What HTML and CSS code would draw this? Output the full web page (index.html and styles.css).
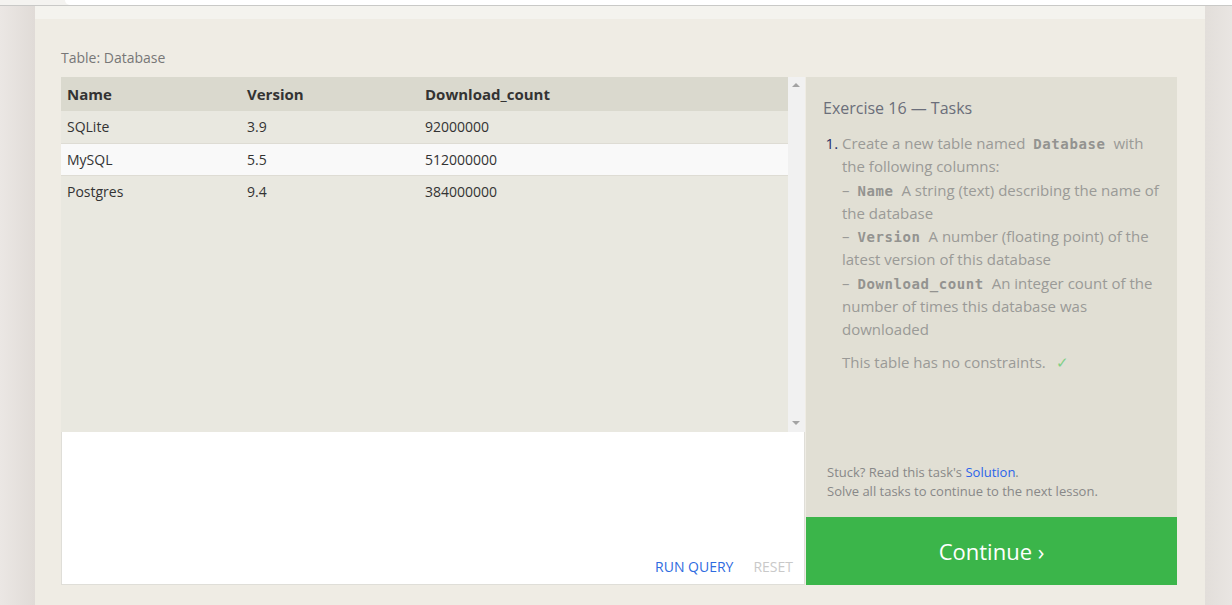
FILE: index.html
```html
<!DOCTYPE html>
<html>
<head>
<meta charset="utf-8">
<link rel="stylesheet" href="styles.css">
</head>
<body>
<div class="topbar"><div class="topfield"></div></div>
<div class="page">
  <div class="gutter left"></div>
  <div class="panel">
    <div class="panel-top"></div>
    <div class="panel-body">
      <div class="caption">Table: Database</div>
      <div class="workspace">
        <div class="leftcol">
          <div class="results">
            <div class="table-wrap">
              <table class="data">
                <thead>
                  <tr><th class="c1">Name</th><th class="c2">Version</th><th class="c3">Download_count</th></tr>
                </thead>
                <tbody>
                  <tr><td>SQLite</td><td>3.9</td><td>92000000</td></tr>
                  <tr class="hl"><td>MySQL</td><td>5.5</td><td>512000000</td></tr>
                  <tr class="last"><td>Postgres</td><td>9.4</td><td>384000000</td></tr>
                </tbody>
              </table>
            </div>
            <div class="scrollbar">
              <span class="arrow up"></span>
              <span class="arrow down"></span>
            </div>
          </div>
          <div class="editor">
            <div class="actions">
              <span class="run">RUN QUERY</span>
              <span class="reset">RESET</span>
            </div>
          </div>
        </div>
        <div class="rightcol">
          <div class="tasks">
            <div class="tasks-title">Exercise 16 — Tasks</div>
            <ol class="task-list">
              <li>Create a new table named <code>Database</code> with the following columns:<br>– <code>Name</code> A string (text) describing the name of the database<br>– <code>Version</code> A number (floating point) of the latest version of this database<br>– <code>Download_count</code> An integer count of the number of times this database was downloaded
                <p class="note">This table has no constraints. <span class="check">✓</span></p>
              </li>
            </ol>
            <div class="stuck">Stuck? Read this task's <a class="sol">Solution</a>.<br>Solve all tasks to continue to the next lesson.</div>
          </div>
          <div class="continue">Continue ›</div>
        </div>
      </div>
    </div>
  </div>
  <div class="gutter right"></div>
</div>
</body>
</html>
```

FILE: styles.css
```css
* { box-sizing: border-box; }
html, body { margin: 0; padding: 0; }
body {
  width: 1232px;
  height: 605px;
  overflow: hidden;
  font-family: "Open Sans", "Noto Sans", sans-serif;
  background: #efece5;
}
.topbar {
  height: 6px;
  background: #f4f3f0;
  border-bottom: 1px solid #c9c9c7;
  padding-left: 65px;
  display: flex;
}
.topfield {
  width: 100%;
  height: 5px;
  background: #ffffff;
  border-radius: 0 0 0 6px;
}
.page {
  display: flex;
  height: 599px;
}
.gutter.left {
  width: 35px;
  background: linear-gradient(to right, #ebe7e4, #e0dbd7);
}
.gutter.right {
  width: 27px;
  background: linear-gradient(to right, #e2deda, #e9e5e2);
}
.panel {
  width: 1170px;
  display: flex;
  flex-direction: column;
}
.panel-top {
  height: 13px;
  background: #f4f3ee;
}
.panel-body {
  flex: 1;
  background: #efece4;
  padding: 30px 28px 0 26px;
}
.caption {
  font-size: 14px;
  color: #777777;
  line-height: 18px;
  height: 28px;
}
.workspace {
  display: flex;
  height: 508px;
}
.leftcol {
  width: 744px;
  display: flex;
  flex-direction: column;
}
.results {
  height: 355px;
  display: flex;
  background: #e9e8e0;
}
.table-wrap {
  flex: 1;
}
.data {
  width: 100%;
  border-collapse: collapse;
  font-size: 14px;
  color: #333333;
}
.data th {
  background: #dad9ce;
  text-align: left;
  font-weight: 700;
  font-size: 15px;
  height: 34px;
  padding: 0 6px;
  color: #333333;
}
.data th.c1 { width: 180px; }
.data th.c2 { width: 178px; }
.data td {
  height: 32px;
  padding: 0 6px;
  border-bottom: 1px solid #dedcd4;
}
.data tr.last td {
  border-bottom: none;
}
.data tr.hl td {
  background: #f9f9f9;
}
.scrollbar {
  width: 17px;
  background: #f1f1f1;
  position: relative;
}
.arrow {
  position: absolute;
  left: 4px;
  width: 0;
  height: 0;
  border-left: 4px solid transparent;
  border-right: 4px solid transparent;
}
.arrow.up { top: 6px; border-bottom: 4px solid #a3a3a3; }
.arrow.down { bottom: 7px; border-top: 4px solid #a3a3a3; }
.editor {
  height: 153px;
  background: #ffffff;
  border: 1px solid #dfded8;
  border-top: none;
  display: flex;
  align-items: flex-end;
  justify-content: flex-end;
}
.actions {
  display: flex;
  gap: 20px;
  font-size: 14px;
  padding: 0 11px 8px 0;
}
.run { color: #2f6be0; }
.reset { color: #c9c9c9; }
.rightcol {
  width: 371px;
  margin-left: 1px;
  display: flex;
  flex-direction: column;
}
.tasks {
  height: 440px;
  background: #e1dfd4;
  padding: 20px 14px 0 17px;
  display: flex;
  flex-direction: column;
}
.tasks-title {
  font-size: 16px;
  color: #6b6e7a;
  line-height: 22px;
  margin-bottom: 13px;
}
.task-list {
  margin: 0;
  padding-left: 19px;
  font-size: 15px;
  line-height: 23.3px;
  color: #9a9a97;
}
.task-list li::marker {
  color: #2a2f66;
}
code {
  font-family: "DejaVu Sans Mono", "Liberation Mono", monospace;
  font-weight: 700;
  font-size: 14px;
  letter-spacing: 0.6px;
  line-height: 1;
  color: #939390;
  padding: 0 4px;
}
.note {
  margin: 9px 0 0;
}
.check {
  color: #7fcf86;
  margin-left: 6px;
}
.stuck {
  margin-top: auto;
  padding: 0 0 16px 4px;
  font-size: 13px;
  line-height: 19px;
  color: #888888;
}
.sol { color: #2a64ea; }
.continue {
  height: 68px;
  background: #3bb54a;
  color: #ffffff;
  font-size: 22px;
  display: flex;
  align-items: center;
  justify-content: center;
}
```
